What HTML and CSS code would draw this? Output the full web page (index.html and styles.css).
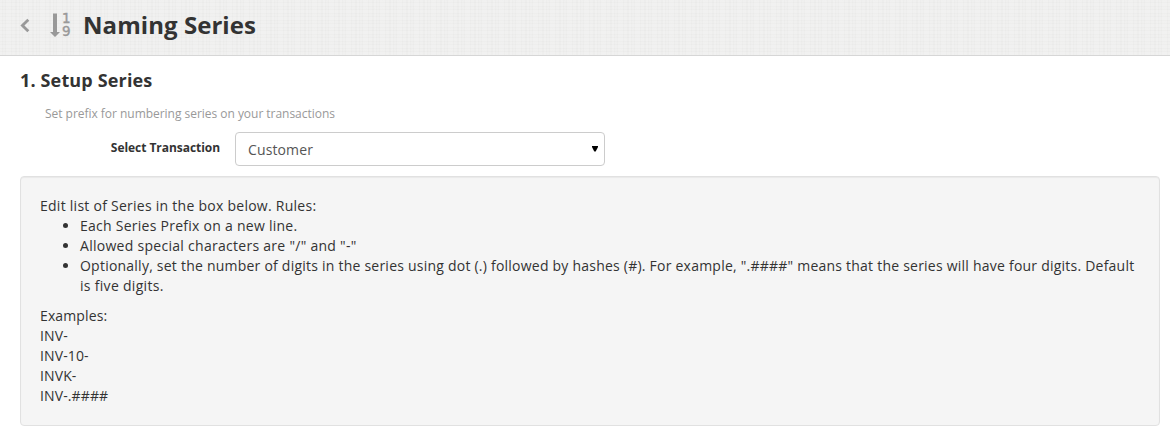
FILE: index.html
```html
<!DOCTYPE html>
<html lang="en">
<head>
<meta charset="utf-8">
<title>Naming Series</title>
<link rel="stylesheet" href="styles.css">
</head>
<body>
<header class="titlebar">
  <svg class="back" width="10" height="16" viewBox="0 0 10 16"><path d="M8.300 1.700 2.400 7.500l5.900 5.800" fill="none" stroke="#999" stroke-width="2.800"/></svg>
  <span class="sort">
    <svg width="10" height="25" viewBox="0 0 10 25"><path d="M3 0.500h4v18.500h3L5 24 0 19h3z" fill="#999"/></svg>
    <span class="digits"><span>1</span><span>9</span></span>
  </span>
  <h1 class="title"><span>Naming Series</span></h1>
</header>
<main class="content">
  <h2 class="section-title"><span>1. Setup Series</span></h2>
  <p class="help"><span>Set prefix for numbering series on your transactions</span></p>
  <div class="field">
    <label class="label"><span>Select Transaction</span></label>
    <div class="select"><span class="value">Customer</span><svg width="6" height="6" viewBox="0 0 6 6"><path d="M0 0h6v1L3.700 5.500H2.300L0 1z"/></svg></div>
  </div>
  <section class="well">
    <div class="intro"><span>Edit list of Series in the box below. Rules:</span></div>
    <ul class="rules">
      <li class="prefix"><span>Each Series Prefix on a new line.</span></li>
      <li class="allowed"><span>Allowed special characters are "/" and "-"</span></li>
      <li><span>Optionally, set the number of digits in the series using dot (.) followed by hashes (#). For example, ".####" means that the series will have four digits. Default</span><br><span class="wrapped">is five digits.</span></li>
    </ul>
    <div class="examples"><span>Examples:</span><br>INV-<br>INV-10-<br>INVK-<br>INV-.####</div>
  </section>
</main>
</body>
</html>
```
FILE: styles.css
```css
* { box-sizing: border-box; }
body {
  margin: 0;
  background: #fff;
  color: #333;
  font: 14px/20px "Open Sans", "Noto Sans", sans-serif;
}
.titlebar {
  display: flex;
  height: 56px;
  padding: 0 20px;
  border-bottom: 1px solid #d6d6d6;
  background:
    repeating-linear-gradient(90deg, rgba(255,255,255,.2) 0 2px, transparent 2px 3px, rgba(255,255,255,.14) 3px 5px, transparent 5px 6px, rgba(255,255,255,.2) 6px 11px, transparent 11px 12px, rgba(255,255,255,.16) 12px 15px, transparent 15px 17px),
    repeating-linear-gradient(0deg, rgba(255,255,255,.2) 0 3px, transparent 3px 4px, rgba(255,255,255,.14) 4px 6px, transparent 6px 7px),
    #eaeae9;
}
.back { margin-top: 18px; }
.sort { display: flex; margin: 13px 0 0 20px; color: #999; }
.digits {
  display: flex;
  flex-direction: column;
  width: 10px;
  margin: -1px 0 0 2px;
  font: 13.5px/13px "DejaVu Sans", sans-serif;
  -webkit-text-stroke: .4px #999;
}
.title { margin: 10px 0 0 11px; font-size: 24px; line-height: 30px; font-weight: 700; letter-spacing: .06px; white-space: nowrap; }
.content { padding: 14px 10px 0 20px; }
.section-title { margin: 0; font-size: 18px; line-height: 20px; font-weight: 700; letter-spacing: .15px; }
.help { margin: 14px 0 8px 25px; font-size: 12px; line-height: 20px; letter-spacing: -.03px; color: #999; }
.field { display: flex; height: 34px; }
.label { width: 200px; padding-top: 6px; font-size: 12px; font-weight: 700; letter-spacing: -.05px; text-align: right; white-space: nowrap; }
.select {
  display: flex;
  align-items: center;
  justify-content: space-between;
  width: 370px;
  margin-left: 15px;
  padding: 0 6px 0 12px;
  border: 1px solid #ccc;
  border-radius: 4px;
  color: #555;
}
.value { padding-top: 2px; letter-spacing: .12px; }
.well {
  height: 250px;
  margin-top: 10px;
  padding: 19px;
  border: 1px solid #e1e1e1;
  border-radius: 4px;
  background: #f5f5f5;
  box-shadow: inset 0 1px 1px rgba(0,0,0,.05);
}
.intro { letter-spacing: .26px; }
.rules { margin: 0 0 10px; padding-left: 40px; letter-spacing: .228px; white-space: nowrap; }
.prefix { letter-spacing: .26px; }
.allowed { letter-spacing: .28px; }
.wrapped { letter-spacing: .3px; }
.examples { letter-spacing: .12px; }
```
